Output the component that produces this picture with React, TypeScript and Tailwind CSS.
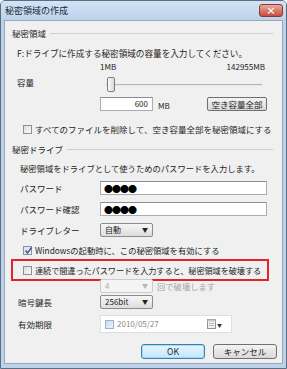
import React from 'react';

const FONT = "font-['Noto_Sans_CJK_JP','Noto_Sans',sans-serif]";

function Check({ checked = false }: { checked?: boolean }) {
  return (
    <span className="relative flex h-[9px] w-[9px] shrink-0 items-center justify-center border border-[#8e8f8f] bg-gradient-to-br from-[#dcdcdc] to-[#fbfbfb]">
      {checked && (
        <svg width="9" height="9" viewBox="0 0 9 9" className="absolute -top-px left-0">
          <path d="M1.5 4.6 L3.6 7 L7.6 1.4" fill="none" stroke="#3d5aa8" strokeWidth="1.6" />
        </svg>
      )}
    </span>
  );
}

function Combo({ value, disabled = false }: { value: string; disabled?: boolean }) {
  return (
    <div
      className={`flex h-[14px] w-[53px] items-center justify-between rounded-[2px] border px-[4px] text-[8px] ${
        disabled
          ? 'border-[#c9cccf] bg-[#f4f4f4] text-[#a9a9a9]'
          : 'border-[#8c8c8c] bg-gradient-to-b from-[#f6f6f6] to-[#dddddd] text-[#1e1e1e]'
      }`}
    >
      <span className="leading-none">{value}</span>
      <span className={`text-[6px] leading-none ${disabled ? 'text-[#b5b5b5]' : 'text-[#222]'}`}>▼</span>
    </div>
  );
}

function Field({ label, children, wide = false }: { label: string; children: React.ReactNode; wide?: boolean }) {
  return (
    <div className={`flex items-center ${wide ? 'pl-[13px]' : 'pl-[15px]'}`}>
      <span className={`${wide ? 'w-[82px]' : 'w-[80px]'} text-[8.5px] leading-none`}>{label}</span>
      {children}
    </div>
  );
}

function GroupTitle({ title }: { title: string }) {
  return (
    <div className="flex h-[12px] items-center gap-[4px] pl-[7px] pr-[9px]">
      <span className="text-[8.5px] leading-none">{title}</span>
      <span className="h-px flex-1 bg-[#c9cfd6]" />
    </div>
  );
}

export default function App() {
  return (
    <div className={`${FONT} h-[369px] w-[287px] overflow-hidden rounded-t-[5px] border border-[#5d6e82] bg-[#bdd2ea] text-[#1e1e1e]`}>
      {/* title bar */}
      <div className="flex h-[19px] items-center justify-between bg-gradient-to-b from-[#d4e3f5] to-[#bcd2eb] pl-[4px] pr-[3px]">
        <span className="text-[9px] leading-none text-[#1b2a3a]">秘密領域の作成</span>
        <span className="flex h-[13px] w-[24px] items-center justify-center rounded-[3px] border border-[#8a3a30] bg-gradient-to-b from-[#e9a99c] to-[#c74a3c] text-[10px] font-bold leading-none text-white">
          ×
        </span>
      </div>

      {/* client */}
      <div className="mx-[3px] h-[344px] border border-[#93a7bf] bg-[#f0f0f0]">
        <div className="mt-[6px]">
          <GroupTitle title="秘密領域" />
        </div>
        <p className="mt-[8px] h-[12px] whitespace-nowrap pl-[12px] text-[8.6px] leading-[12px]">
          F:ドライブに作成する秘密領域の容量を入力してください。
        </p>
        <div className="mt-[2px] flex h-[12px] items-center justify-between pl-[95px] pr-[17px] text-[8px] leading-none">
          <span>1MB</span>
          <span>142955MB</span>
        </div>
        <div className="mt-[4px] flex h-[16px] items-start pl-[12px]">
          <span className="mt-[1px] w-[89px] text-[8.5px] leading-none">容量</span>
          <div className="relative h-[16px] w-[156px]">
            <div className="absolute left-0 right-0 top-[7px] h-[2px] border-t border-[#b5b5b5] bg-[#e8e8e8]" />
            <div className="absolute left-[1px] top-0 h-[15px] w-[8px] rounded-[2px] border border-[#7d7d7d] bg-gradient-to-r from-[#fafafa] to-[#dadada]" />
          </div>
        </div>
        <div className="mt-[4px] flex h-[14px] items-center pl-[95px]">
          <div className="flex h-[14px] w-[53px] items-center justify-end border border-[#abadb3] border-t-[#8a8d93] bg-white pr-[4px] text-[8px] leading-none">
            600
          </div>
          <span className="ml-[5px] mt-[3px] text-[8px] leading-none">MB</span>
          <div className="ml-auto mr-[15px] flex h-[14px] w-[60px] items-center justify-center rounded-[2px] border border-[#707070] bg-gradient-to-b from-[#f4f4f4] to-[#d8d8d8] text-[8.5px] leading-none">
            空き容量全部
          </div>
        </div>
        <div className="mt-[12px] flex h-[12px] items-center gap-[3px] pl-[18px]">
          <Check />
          <span className="whitespace-nowrap text-[8.5px] leading-none">すべてのファイルを削除して、空き容量全部を秘密領域にする</span>
        </div>

        <div className="mt-[8px]">
          <GroupTitle title="秘密ドライブ" />
        </div>
        <p className="mt-[7px] h-[12px] whitespace-nowrap pl-[15px] text-[8.3px] leading-[12px]">
          秘密領域をドライブとして使うためのパスワードを入力します。
        </p>
        <div className="mt-[7px]">
          <Field label="パスワード">
            <div className="flex h-[14px] w-[167px] items-center border border-[#abadb3] border-t-[#8a8d93] bg-white pl-[3px] text-[9px] leading-none tracking-[-1px] text-black">
              ●●●●
            </div>
          </Field>
        </div>
        <div className="mt-[7px]">
          <Field label="パスワード確認">
            <div className="flex h-[14px] w-[167px] items-center border border-[#abadb3] border-t-[#8a8d93] bg-white pl-[3px] text-[9px] leading-none tracking-[-1px] text-black">
              ●●●●
            </div>
          </Field>
        </div>
        <div className="mt-[7px]">
          <Field label="ドライブレター">
            <Combo value="自動" />
          </Field>
        </div>
        <div className="mt-[7px] flex h-[12px] items-center gap-[3px] pl-[18px]">
          <Check checked />
          <span className="whitespace-nowrap text-[8.3px] leading-none">Windowsの起動時に、この秘密領域を有効にする</span>
        </div>
        <div className="ml-[6px] mt-[3px] flex h-[22px] w-[258px] items-center gap-[3px] border-2 border-[#e0262b] pl-[10px]">
          <Check />
          <span className="whitespace-nowrap text-[8.2px] leading-none tracking-[-0.1px]">
            連続で間違ったパスワードを入力すると、秘密領域を破壊する
          </span>
        </div>
        <div className="-mt-[2px] flex items-center pl-[95px]">
          <Combo value="4" disabled />
          <span className="ml-[4px] text-[8.3px] leading-none text-[#a5a5a5]">回で破壊します</span>
        </div>
        <div className="mt-[2px]">
          <Field label="暗号鍵長" wide>
            <Combo value="256bit" />
          </Field>
        </div>
        <div className="mt-[6px]">
          <Field label="有効期限" wide>
            <div className="flex h-[18px] w-[132px] items-center border border-[#dcdfe3] bg-white pl-[4px] pr-[9px]">
              <span className="h-[9px] w-[9px] border border-[#9ab3cc] bg-gradient-to-br from-[#c9dcef] to-[#e9f1fa]" />
              <span className="ml-[3px] text-[8px] leading-none text-[#8a8a8a]">2010/05/27</span>
              <span className="ml-auto flex items-center gap-[1px]">
                <svg width="9" height="10" viewBox="0 0 9 10">
                  <rect x="0.5" y="0.5" width="8" height="9" fill="#eef0f2" stroke="#8d9296" />
                  <rect x="0.5" y="0.5" width="8" height="2" fill="#c3c8cd" />
                  <path d="M2 4.5h5M2 6.5h5" stroke="#a9aeb3" strokeWidth="0.8" />
                </svg>
                <span className="text-[5px] leading-none text-[#333]">▼</span>
              </span>
            </div>
          </Field>
        </div>
        <div className="mt-[11px] flex items-center justify-end gap-[8px] pr-[5px]">
          <div className="flex h-[15px] w-[64px] items-center justify-center rounded-[3px] border border-[#3c7fb1] bg-gradient-to-b from-[#eaf6fd] to-[#bee6fd] text-[8.5px] leading-none shadow-[inset_0_0_0_1px_#a9d8f5]">
            OK
          </div>
          <div className="flex h-[15px] w-[64px] items-center justify-center rounded-[3px] border border-[#707070] bg-gradient-to-b from-[#f4f4f4] to-[#d8d8d8] text-[8.5px] leading-none">
            キャンセル
          </div>
        </div>
      </div>
    </div>
  );
}
